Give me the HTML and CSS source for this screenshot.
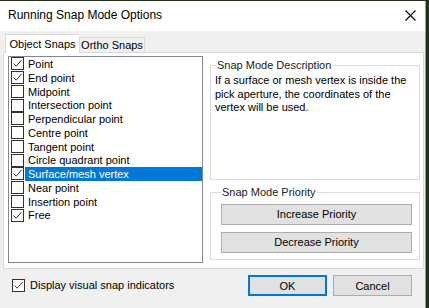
FILE: index.html
```html
<!DOCTYPE html>
<html lang="en">
<head>
    <meta charset="UTF-8">
    <title>Running Snap Mode Options</title>
    <link rel="stylesheet" href="styles.css">
</head>
<body>
    <div class="dialog">
        <div class="titlebar">
            <span class="title">Running Snap Mode Options</span>
            <svg class="close" width="11" height="11" viewBox="0 0 11 11">
                <path d="M0.5 0.5 L10.5 10.5 M10.5 0.5 L0.5 10.5" stroke="#000" stroke-width="1.1"/>
            </svg>
        </div>
        <div class="content">
            <div class="tabs">
                <div class="tab active">Object Snaps</div>
                <div class="tab">Ortho Snaps</div>
            </div>
            <div class="panel">
                <ul class="listbox" id="snap-list">
                    <!-- items inserted by script -->
                </ul>
                <div class="side">
                    <fieldset class="group desc">
                        <legend>Snap Mode Description</legend>
                        <p>If a surface or mesh vertex is inside the pick aperture, the coordinates of the vertex will be used.</p>
                    </fieldset>
                    <fieldset class="group priority">
                        <legend>Snap Mode Priority</legend>
                        <button class="btn wide">Increase Priority</button>
                        <button class="btn wide">Decrease Priority</button>
                    </fieldset>
                </div>
            </div>
            <div class="footer">
                <label class="display-check">
                    <span class="box"><svg width="11" height="11" viewBox="0 0 11 11"><path d="M1.5 5.5 L4.2 8.2 L9.5 2" fill="none" stroke="#333" stroke-width="1"/></svg></span>
                    Display visual snap indicators
                </label>
                <div class="buttons">
                    <button class="btn default">OK</button>
                    <button class="btn">Cancel</button>
                </div>
            </div>
        </div>
    </div>
    <script>
        const snaps = [
            { name: 'Point', on: true },
            { name: 'End point', on: true },
            { name: 'Midpoint', on: false },
            { name: 'Intersection point', on: false },
            { name: 'Perpendicular point', on: false },
            { name: 'Centre point', on: false },
            { name: 'Tangent point', on: false },
            { name: 'Circle quadrant point', on: false },
            { name: 'Surface/mesh vertex', on: true, selected: true },
            { name: 'Near point', on: false },
            { name: 'Insertion point', on: false },
            { name: 'Free', on: true },
        ];
        const tick = '<svg width="11" height="11" viewBox="0 0 11 11"><path d="M1.5 5.5 L4.2 8.2 L9.5 2" fill="none" stroke="#333" stroke-width="1"/></svg>';
        const list = document.getElementById('snap-list');
        snaps.forEach(item => {
            const li = document.createElement('li');
            li.className = 'item' + (item.selected ? ' selected' : '');
            li.innerHTML = `<span class="box">${item.on ? tick : ''}</span><span class="label">${item.name}</span>`;
            list.appendChild(li);
        });
    </script>
</body>
</html>
```

FILE: styles.css
```css
body {
    margin: 0;
    background-color: #24301c;
    font-family: "Liberation Sans", Arial, sans-serif;
    font-size: 11px;
    color: #000;
    overflow: hidden;
}
.dialog {
    width: 426px;
    height: 307px;
    margin-top: 1px;
    background-color: #f0f0f0;
    box-sizing: border-box;
    border-right: 1px solid #9a9a9a;
}
.titlebar {
    height: 30px;
    background-color: #fff;
    display: flex;
    align-items: center;
    padding-left: 8px;
    padding-right: 9px;
}
.title {
    font-size: 12px;
    flex: 1;
    margin-top: -2px;
}
.close {
    margin-top: -2px;
}
.content {
    padding: 3px 0 0 3px;
}
.tabs {
    display: flex;
    align-items: flex-end;
    height: 18px;
    padding-left: 2px;
    position: relative;
    z-index: 1;
}
.tab {
    height: 15px;
    box-sizing: border-box;
    border: 1px solid #d9d9d9;
    border-bottom: none;
    background-color: #f0f0f0;
    width: 66px;
    line-height: 14px;
    text-align: center;
    white-space: nowrap;
}
.tab.active {
    height: 19px;
    width: 74px;
    background-color: #fff;
    margin-bottom: -1px;
    line-height: 18px;
    border-right: none;
}
.panel {
    width: 421px;
    height: 217px;
    box-sizing: border-box;
    background-color: #fff;
    border: 1px solid #d9d9d9;
    display: flex;
    padding: 3px 0 0 4px;
}
.listbox {
    list-style: none;
    margin: 0;
    width: 195px;
    height: 207px;
    box-sizing: border-box;
    border: 1px solid #828790;
    padding: 0 0 0 2px;
}
.item {
    display: flex;
    height: 13.75px;
    line-height: 14.5px;
}
.box {
    width: 13px;
    height: 13px;
    box-sizing: border-box;
    border: 1px solid #333;
    background-color: #fff;
    display: flex;
    align-items: center;
    justify-content: center;
    margin-top: 0.4px;
}
.label {
    flex: 1;
    padding-left: 3px;
    margin-left: 1px;
}
.item.selected .label {
    background-color: #0078d7;
    color: #fff;
}
.side {
    margin-left: 7px;
    display: flex;
    flex-direction: column;
}
.group {
    margin: 0;
    width: 210px;
    box-sizing: border-box;
    border: 1px solid #dcdcdc;
    padding: 0 6px 0 5px;
}
.group legend {
    padding: 0 1px;
    line-height: 13px;
    color: #222;
}
.desc {
    margin-top: 3px;
    height: 120.5px;
}
.desc p {
    margin: 2px 0 0 -1px;
    line-height: 13.5px;
}
.priority {
    margin-top: 6px;
    height: 74.5px;
    padding-left: 10px;
}
.btn {
    font-family: "Liberation Sans", Arial, sans-serif;
    font-size: 11px;
    color: #000;
    background-color: #e1e1e1;
    border: 1px solid #adadad;
    height: 21px;
    width: 79px;
    padding: 0;
}
.btn.wide {
    display: block;
    width: 191px;
    height: 21px;
}
.priority .btn.wide:first-of-type {
    margin-top: 5px;
}
.priority .btn.wide + .btn.wide {
    margin-top: 7px;
}
.btn.default {
    border-color: #0078d7;
    box-shadow: inset 0 0 0 1px #0078d7;
}
.footer {
    display: flex;
    align-items: center;
    height: 35px;
    padding-left: 9px;
}
.display-check {
    display: flex;
    align-items: center;
    flex: 1;
    margin-top: -2px;
}
.display-check .box {
    margin-right: 5px;
}
.buttons {
    display: flex;
    gap: 6px;
    margin-right: 13px;
    margin-top: -2px;
}
```
